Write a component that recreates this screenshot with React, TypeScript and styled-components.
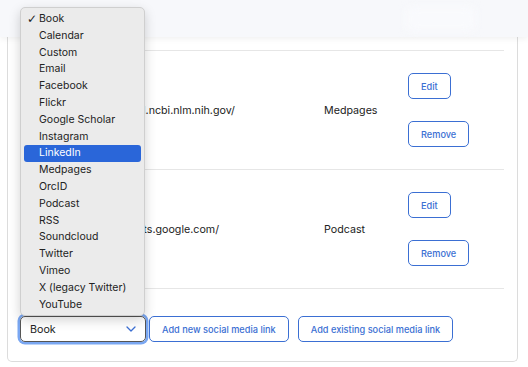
import React from 'react';
import styled, {createGlobalStyle} from 'styled-components';

const Global = createGlobalStyle`
  * {
    margin: 0;
    box-sizing: border-box;
  }
  body {
    background: #ffffff;
    font-family: Inter, 'Noto Sans', sans-serif;
    color: #222;
  }
`

const Page = styled.div`
  position: relative;
  width: 528px;
  height: 367px;
  overflow: hidden;
`

const Header = styled.div`
  position: relative;
  z-index: 1;
  display: flex;
  justify-content: flex-end;
  align-items: center;
  height: 37px;
  padding-right: 52px;
  background: #f7f8fb;
  box-shadow: 0 2px 6px rgba(0, 0, 0, 0.06);
`

const GhostButton = styled.div`
  width: 70px;
  height: 24px;
  border-radius: 6px;
  background: #f9fafd;
  filter: blur(4px);
`

const Card = styled.div`
  margin: 0 10px 0 7px;
  height: 325px;
  border: 1px solid #dcdcdc;
  border-top: none;
  border-radius: 0 0 5px 5px;
  padding: 13px 13px 0 12px;
`

const Row = styled.div`
  display: grid;
  grid-template-columns: 304px 84px 1fr;
  align-items: center;
  height: 119px;
  border-top: 1px solid #e6e6e6;
  font-size: 10.7px;
`

const Cell = styled.div`
  white-space: nowrap;
  overflow: hidden;
`

const UrlCell = styled(Cell)<{ $indent: number }>`
  padding-left: ${p => p.$indent}px;
`

const Actions = styled.div`
  display: flex;
  flex-direction: column;
  align-items: flex-start;
  gap: 22px;
`

const OutlineButton = styled.button`
  flex-shrink: 0;
  height: 26px;
  padding: 0 12px;
  white-space: nowrap;
  background: #fff;
  border: 1.5px solid #3b6fd3;
  border-radius: 5px;
  color: #3b6fd3;
  font-family: Inter, 'Noto Sans', sans-serif;
  font-size: 9.2px;
  font-weight: 500;
`

const Footer = styled.div`
  display: flex;
  align-items: center;
  border-top: 1px solid #e6e6e6;
  padding-top: 27px;
`

const SelectBox = styled.div`
  flex-shrink: 0;
  display: flex;
  align-items: center;
  justify-content: space-between;
  width: 126px;
  height: 26px;
  padding: 0 9px 0 9px;
  border: 1.5px solid #555;
  border-radius: 5px;
  box-shadow: 0 0 0 2.5px #7aa7f2;
  font-size: 10.7px;
  color: #222;
`

const Spacer = styled.span<{ $w: number }>`
  flex-shrink: 0;
  width: ${p => p.$w}px;
`

const Popup = styled.div`
  position: absolute;
  z-index: 5;
  left: 20px;
  top: 7px;
  width: 125px;
  height: 309px;
  padding: 3px 3px;
  background: #ebebeb;
  border: 1px solid #cfcfcf;
  border-radius: 5px;
  box-shadow: 0 4px 12px rgba(0, 0, 0, 0.18);
`

const Option = styled.div<{ $active?: boolean }>`
  position: relative;
  height: 16.8px;
  line-height: 16.8px;
  padding-left: 15px;
  border-radius: 3px;
  font-size: 10.5px;
  color: ${p => (p.$active ? '#fff' : '#222')};
  background: ${p => (p.$active ? '#2a66d9' : 'transparent')};
`

const Check = styled.span`
  position: absolute;
  left: 3px;
  font-family: 'DejaVu Sans', sans-serif;
  font-size: 12px;
  font-weight: 700;
`

const options = [
    'Book', 'Calendar', 'Custom', 'Email', 'Facebook', 'Flickr', 'Google Scholar',
    'Instagram', 'LinkedIn', 'Medpages', 'OrcID', 'Podcast', 'RSS', 'Soundcloud',
    'Twitter', 'Vimeo', 'X (legacy Twitter)', 'YouTube'
]

const links = [
    {url: 'https://pubmed.ncbi.nlm.nih.gov/', type: 'Medpages', indent: 48},
    {url: 'https://podcasts.google.com/', type: 'Podcast', indent: 50}
]

const Chevron = () => (
    <svg width="10" height="6" viewBox="0 0 10 6" fill="none">
        <path d="M1 1l4 4 4-4" stroke="#3b6fd3" strokeWidth="1.3" strokeLinecap="round" strokeLinejoin="round"/>
    </svg>
)

const App = () => {
    return (
        <>
            <Global/>
            <Page>
                <Header>
                    <GhostButton/>
                </Header>
                <Card>
                    {links.map(link => (
                        <Row key={link.url}>
                            <UrlCell $indent={link.indent}>{link.url}</UrlCell>
                            <Cell>{link.type}</Cell>
                            <Actions>
                                <OutlineButton>Edit</OutlineButton>
                                <OutlineButton>Remove</OutlineButton>
                            </Actions>
                        </Row>
                    ))}
                    <Footer>
                        <SelectBox>
                            Book
                            <Chevron/>
                        </SelectBox>
                        <Spacer $w={3}/>
                        <OutlineButton>Add new social media link</OutlineButton>
                        <Spacer $w={9}/>
                        <OutlineButton>Add existing social media link</OutlineButton>
                    </Footer>
                </Card>
                <Popup>
                    {options.map(o => (
                        <Option key={o} $active={o === 'LinkedIn'}>
                            {o === 'Book' && <Check>✓</Check>}
                            {o}
                        </Option>
                    ))}
                </Popup>
            </Page>
        </>
    );
}

export default App;
